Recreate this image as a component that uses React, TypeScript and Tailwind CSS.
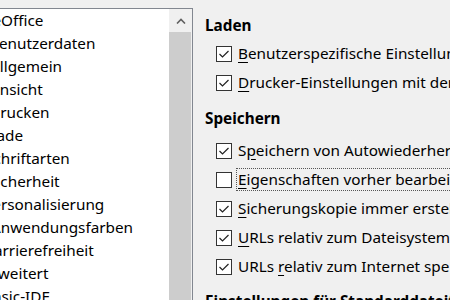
const treeItems = [
  { label: "LibreOffice", indent: "-ml-[35px]" },
  { label: "Benutzerdaten", indent: "-ml-[11px]" },
  { label: "Allgemein", indent: "-ml-[10px]" },
  { label: "Ansicht", indent: "-ml-[10px]" },
  { label: "Drucken", indent: "-ml-[11px]" },
  { label: "Pfade", indent: "-ml-[18px]" },
  { label: "Schriftarten", indent: "-ml-[15px]" },
  { label: "Sicherheit", indent: "-ml-[12px]" },
  { label: "Personalisierung", indent: "-ml-[17px]" },
  { label: "Anwendungsfarben", indent: "-ml-[9px]" },
  { label: "Barrierefreiheit", indent: "-ml-[16px]" },
  { label: "Erweitert", indent: "-ml-[17px]" },
  { label: "Basic-IDE", indent: "-ml-[17px]" },
];

function CheckBox({ checked }: { checked: boolean }) {
  return (
    <span className="flex h-4 w-4 shrink-0 items-center justify-center border border-[#333] bg-white">
      {checked && (
        <svg width="12" height="10" viewBox="0 0 12 10" fill="none">
          <path d="M1.5 5 L4.5 8 L10.5 2" stroke="#222" strokeWidth="1.2" />
        </svg>
      )}
    </span>
  );
}

function Option({
  checked,
  pre,
  accel,
  post,
  focused,
}: {
  checked: boolean;
  pre?: string;
  accel: string;
  post: string;
  focused?: boolean;
}) {
  return (
    <div className="flex h-[29px] items-center gap-[6px] pl-[11px]">
      <CheckBox checked={checked} />
      <span
        className={
          focused
            ? "-ml-[2px] whitespace-nowrap border border-dotted border-[#555] px-[1px] leading-[21px]"
            : "whitespace-nowrap"
        }
      >
        {pre}
        <u className="underline-offset-[3px]">{accel}</u>
        {post}
      </span>
    </div>
  );
}

export default function App() {
  return (
    <div
      className="flex h-[300px] w-[450px] overflow-hidden bg-[#f0f0f0] text-[15.3px] text-black"
      style={{ fontFamily: '"Noto Sans", "Open Sans", sans-serif' }}
    >
      <div className="mt-2 flex h-[300px] w-[193px] shrink-0 border-t border-r border-[#828790] bg-white">
        <ul className="flex-1 overflow-hidden">
          {treeItems.map((item) => (
            <li key={item.label} className="flex h-[23px] items-center whitespace-nowrap">
              <span className={item.indent}>{item.label}</span>
            </li>
          ))}
        </ul>
        <div className="flex w-[23px] flex-col bg-[#f0f0f0]">
          <div className="flex h-[23px] items-center justify-center">
            <svg width="10" height="6" viewBox="0 0 10 6" fill="none">
              <path d="M1 5.5 L5 1.5 L9 5.5" stroke="#606060" strokeWidth="1.6" />
            </svg>
          </div>
          <div className="mr-[1px] flex-1 bg-[#cdcdcd]" />
        </div>
      </div>

      <div className="min-w-0 flex-1 pl-[12px] pt-[13px]">
        <h2 className="flex h-6 items-center font-bold">Laden</h2>
        <div className="mt-[2px]">
          <Option checked accel="B" post="enutzerspezifische Einstellungen mit dem Dokument laden" />
          <Option checked accel="D" post="rucker-Einstellungen mit dem Dokument laden" />
        </div>
        <h2 className="mt-[9px] flex h-6 items-center font-bold">Speichern</h2>
        <div className="mt-[6px]">
          <Option checked pre="S" accel="p" post="eichern von Autowiederherstellungsinformationen" />
          <Option checked={false} focused accel="E" post="igenschaften vorher bearbeiten" />
          <Option checked accel="S" post="icherungskopie immer erstellen" />
          <Option checked accel="U" post="RLs relativ zum Dateisystem speichern" />
          <Option checked pre="URLs " accel="r" post="elativ zum Internet speichern" />
        </div>
        <h2 className="mt-2 flex h-6 items-center whitespace-nowrap font-bold">
          Einstellungen für Standarddateiformat und ODF
        </h2>
      </div>
    </div>
  );
}
